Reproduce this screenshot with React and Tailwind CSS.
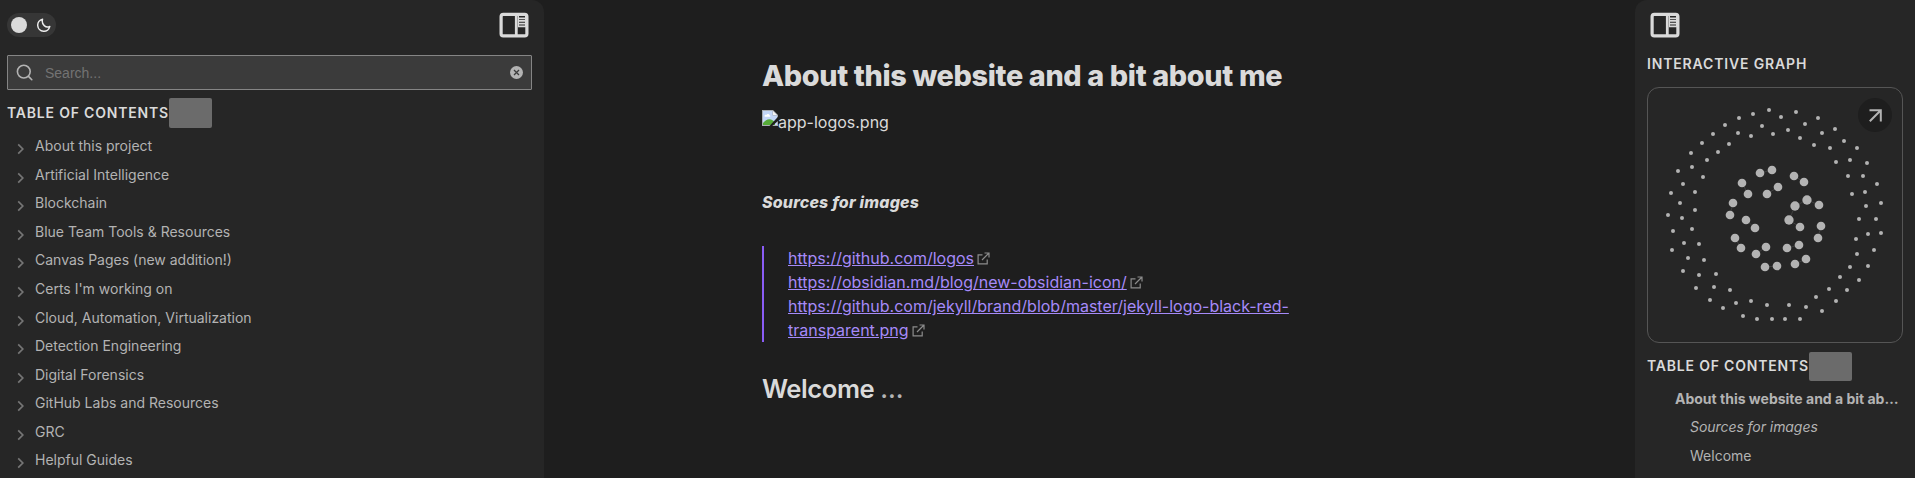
import React from "react";

const topics = [
  "About this project",
  "Artificial Intelligence",
  "Blockchain",
  "Blue Team Tools & Resources",
  "Canvas Pages (new addition!)",
  "Certs I'm working on",
  "Cloud, Automation, Virtualization",
  "Detection Engineering",
  "Digital Forensics",
  "GitHub Labs and Resources",
  "GRC",
  "Helpful Guides",
];

// Unlinked notes, placed around the rim of the graph.
const outerNodes = [
  [402, 90], [354, 102], [312, 114], [270, 135], [234, 162], [201, 189], [168, 219], [129, 273],
  [438, 111], [483, 96], [510, 132], [549, 114], [600, 147], [627, 183], [666, 204], [696, 249],
  [381, 138], [309, 159], [348, 168], [414, 162], [459, 150], [495, 174], [537, 195], [561, 159],
  [585, 204], [603, 246], [645, 240], [639, 288], [684, 288], [726, 312], [690, 336], [651, 342],
  [738, 369], [693, 378], [282, 192], [249, 216], [216, 240], [171, 261], [204, 291], [144, 312],
  [108, 339], [180, 336], [135, 369], [180, 390], [99, 405], [141, 414], [114, 453], [171, 447],
  [147, 489], [192, 492], [111, 510], [159, 534], [207, 540], [144, 573], [192, 585], [243, 582],
  [183, 624], [237, 621], [285, 630], [225, 660], [264, 684], [303, 669], [348, 663], [396, 675],
  [324, 708], [366, 717], [411, 717], [450, 717], [495, 717], [462, 675], [513, 681], [543, 651],
  [561, 693], [603, 663], [582, 627], [636, 630], [615, 591], [672, 600], [645, 561], [699, 558],
  [666, 522], [717, 510], [663, 477], [699, 462], [738, 459], [672, 417], [723, 417],
];

// Linked notes: x, y, radius.
const innerNodes = [
  [375, 279, 13], [411, 270, 13], [321, 309, 13], [339, 342, 13], [396, 342, 13], [429, 321, 13],
  [477, 288, 13], [507, 306, 13], [294, 369, 13], [285, 405, 13], [480, 378, 14], [516, 360, 14],
  [552, 375, 13], [333, 420, 13], [360, 444, 13], [462, 420, 14], [495, 441, 13], [558, 438, 13],
  [549, 474, 13], [300, 474, 13], [318, 504, 13], [363, 522, 13], [393, 501, 13], [456, 504, 13],
  [492, 495, 13], [390, 561, 13], [426, 558, 13], [480, 552, 13], [513, 537, 13],
];

const links = [
  [0, 1], [2, 3], [4, 5], [6, 7], [8, 9], [10, 11], [11, 12], [10, 15], [13, 14],
  [15, 16], [17, 18], [19, 20], [21, 22], [23, 24], [25, 26], [27, 28],
];

function PanelIcon() {
  return (
    <svg className="block h-[26px] w-[30px]" viewBox="0 0 30 26" fill="none" stroke="#dadada">
      <rect x="2.1" y="2.3" width="25.8" height="21.6" rx="2.2" strokeWidth="3.2" />
      <path d="M17.3 2v22" strokeWidth="2.8" />
      <path d="M19 6.3h8M19 8.9h8M19 11.6h8M19 14.3h8" strokeWidth="1.7" />
      <path d="M19.5 4v11M26.5 4v11" strokeWidth="1" />
    </svg>
  );
}

function ExternalIcon() {
  return (
    <svg className="ml-[3px] inline-block h-[13px] w-[13px] align-[-1px]" viewBox="0 0 13 13" fill="none" stroke="#8c8c8c" strokeWidth="1.2">
      <path d="M5.5 2.8H1.1v9.1h9.1V7.5M7.5 1H12v4.5M12 1 5 8" />
    </svg>
  );
}

function BrokenImageIcon() {
  return (
    <svg className="block h-4 w-4" viewBox="0 0 16 16">
      <path d="M0 0h11l5 5v11H0z" fill="#a9adb3" />
      <path d="M1 1h9.5v4.5H15V15H1z" fill="#c3d6f7" />
      <path d="M2.5 6.3c0-1.4 1.4-1.8 2-1.2.5-1.6 2.9-1.4 3 .2 1 .1 1.1 1.2.6 1.4H3z" fill="#fff" />
      <path d="M1 15v-2c2-2 4-3.7 6.5-3.7 2.2 0 4 1.3 5.5 3.2V15z" fill="#56aa38" />
      <path d="M11 1v4h4z" fill="#f4f4f4" />
      <path d="M16 6.8 7.5 16h2.7L16 11z" fill="#1e1e1e" />
    </svg>
  );
}

function ContentsHeading({ boxClass }) {
  return (
    <div className="flex h-[30px] items-center">
      <span className="pb-[2px] text-[14px] font-semibold tracking-[0.8px] text-[#dadada]">TABLE OF CONTENTS</span>
      <span className={`w-[43px] self-end rounded-[2px] bg-[#6b6b6b] ${boxClass}`} />
    </div>
  );
}

function LeftSidebar() {
  return (
    <aside className="flex w-[544px] shrink-0 flex-col rounded-tr-[12px] bg-[#262626] pr-3 pl-[7px]">
      <div className="flex h-[55px] items-start justify-between pt-3 pr-[3px]">
        <div className="mt-px flex h-6 w-[49px] items-center justify-between rounded-full bg-[#363636] pr-[5px] pl-1">
          <span className="h-4 w-4 rounded-full bg-[#dadada]" />
          <svg className="h-[14px] w-[14px]" viewBox="0 0 24 24" fill="none" stroke="#ececec" strokeWidth="2.5" strokeLinecap="round" strokeLinejoin="round">
            <path d="M9.5 2A10.5 10.5 0 1 0 22 14.5C15.5 18 7 11.5 9.5 2z" />
          </svg>
        </div>
        <PanelIcon />
      </div>
      <div className="flex h-[35px] items-center rounded-[1px] border border-[#858585] bg-[#3b3b3b] pr-2 pl-2">
        <svg className="h-[17px] w-[17px]" viewBox="0 0 17 17" fill="none" stroke="#b3b3b3" strokeWidth="1.6" strokeLinecap="round">
          <circle cx="7.8" cy="7.6" r="6.4" />
          <path d="m12.5 12.4 3.3 3.3" />
        </svg>
        <span className="ml-[12px] flex-1 pt-px font-['Liberation_Sans',sans-serif] text-[14px] text-[#737373]">Search...</span>
        <svg className="h-[13px] w-[13px]" viewBox="0 0 13 13">
          <circle cx="6.5" cy="6.5" r="6.5" fill="#b3b3b3" />
          <path d="m4 4 5 5M9 4 4 9" stroke="#3b3b3b" strokeWidth="1.3" />
        </svg>
      </div>
      <div className="mt-2">
        <ContentsHeading boxClass="h-[30px]" />
      </div>
      <ul className="mt-[4px] flex flex-col">
        {topics.map((topic) => (
          <li key={topic} className="flex h-[28.56px] items-center pl-[10px]">
            <svg className="mt-[6px] h-[12px] w-[8px]" viewBox="0 0 8 12" fill="none" stroke="#757575" strokeWidth="1.7">
              <path d="m1.2 1.4 4.6 4.6-4.6 4.6" />
            </svg>
            <span className="ml-[10px] text-[14px] leading-[18px] text-[#b3b3b3]">{topic}</span>
          </li>
        ))}
      </ul>
    </aside>
  );
}

function Link({ children }) {
  return <a className="text-[#a68af9] underline">{children}</a>;
}

function Article() {
  return (
    <main className="flex min-w-0 flex-1 flex-col pl-[218px] text-[#dadada]">
      <h1 className="mt-[58px] text-[28.8px] leading-[35px] font-extrabold tracking-[-0.35px]">About this website and a bit about me</h1>
      <div className="mt-[17px] flex h-6 items-start">
        <BrokenImageIcon />
        <span className="text-[16px] leading-6">app-logos.png</span>
      </div>
      <h5 className="mt-[56px] text-[16px] leading-6 font-extrabold tracking-[0.19px] italic">Sources for images</h5>
      <blockquote className="mt-8 w-[560px] border-l-2 border-[#8a5cf5] pl-6 text-[16px] leading-6">
        <div><Link>https://github.com/logos</Link><ExternalIcon /></div>
        <div><Link>https://obsidian.md/blog/new-obsidian-icon/</Link><ExternalIcon /></div>
        <div><Link>https://github.com/jekyll/brand/blob/master/jekyll-logo-black-red-<br />transparent.png</Link><ExternalIcon /></div>
      </blockquote>
      <h2 className="mt-[31px] text-[25.6px] leading-[31px] font-semibold tracking-[-0.45px]">Welcome <span className="font-medium tracking-normal text-[#b3b3b3]">...</span></h2>
    </main>
  );
}

function Graph() {
  return (
    <div className="relative h-[256px] w-[256px] rounded-[12px] border border-[#555555]">
      <svg className="block h-[254px] w-[254px]" viewBox="39 24 762 762" fill="#b3b3b3">
        <g stroke="#3f3f3f" strokeWidth="3">
          {links.map(([a, b]) => (
            <line key={`${a}-${b}`} x1={innerNodes[a][0]} y1={innerNodes[a][1]} x2={innerNodes[b][0]} y2={innerNodes[b][1]} />
          ))}
        </g>
        {outerNodes.map(([x, y]) => <circle key={`${x}-${y}`} cx={x} cy={y} r="6" />)}
        {innerNodes.map(([x, y, r]) => <circle key={`${x}-${y}`} cx={x} cy={y} r={r} />)}
      </svg>
      <button className="absolute top-[10px] right-[10px] flex h-[34px] w-[34px] items-center justify-center rounded-full bg-[#1e1e1e]">
        <svg className="h-[13px] w-[13px]" viewBox="0 0 13 13" fill="none" stroke="#b3b3b3" strokeWidth="2">
          <path d="M.5 1.2h11.3v11.3M11.8 1.2.8 12.2" />
        </svg>
      </button>
    </div>
  );
}

function RightSidebar() {
  return (
    <aside className="flex w-[280px] shrink-0 flex-col rounded-tl-[12px] bg-[#262626] pl-3">
      <div className="h-[52px] pt-3 pl-[3px]">
        <PanelIcon />
      </div>
      <div className="h-[35px] text-[14px] leading-[24px] font-semibold tracking-[0.84px] text-[#dadada]">INTERACTIVE GRAPH</div>
      <Graph />
      <div className="mt-2">
        <ContentsHeading boxClass="h-[29px]" />
      </div>
      <div className="mt-[4px] w-[257px] text-[14px] text-[#b3b3b3]">
        <div className="pl-7 leading-[28px] font-bold whitespace-nowrap">About this website and a bit ab…</div>
        <div className="pl-[43px] leading-[28px] tracking-[-0.06px] italic">Sources for images</div>
        <div className="pl-[43px] leading-[30px]">Welcome</div>
      </div>
    </aside>
  );
}

export default function App() {
  return (
    <div className="flex h-[478px] w-[1915px] overflow-hidden bg-[#1e1e1e] font-['Inter',sans-serif]">
      <LeftSidebar />
      <Article />
      <RightSidebar />
    </div>
  );
}
